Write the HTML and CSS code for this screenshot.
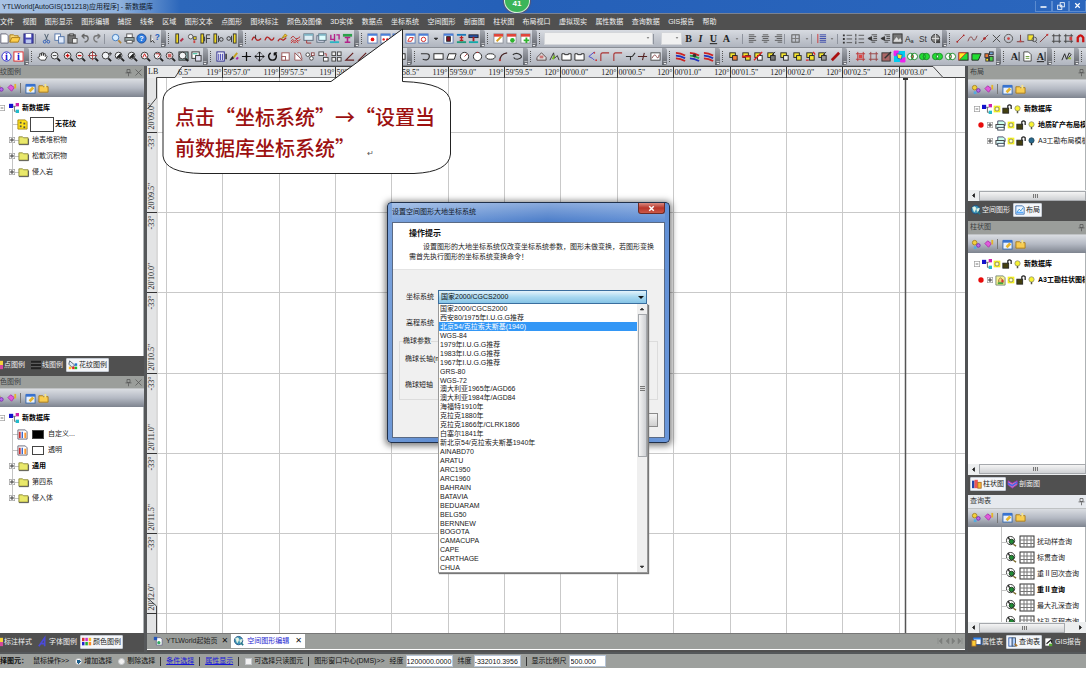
FILE: index.html
```html
<!DOCTYPE html>
<html lang="zh-CN">
<head>
<meta charset="utf-8">
<title>YTLWorld[AutoGIS(151218)应用程序] - 新数据库</title>
<link rel="stylesheet" href="styles.css">
</head>
<body>
<div class="app">
  <header class="titlebar">
    <h1 class="titlebar-text">YTLWorld[AutoGIS(151218)应用程序] - 新数据库</h1>
    <span class="badge">41</span>
    <div class="window-buttons">
      <button class="win-btn" aria-label="最小化"><i data-icon="winmin"></i></button>
      <button class="win-btn" aria-label="还原"><i data-icon="winmax"></i></button>
      <button class="win-btn" aria-label="关闭"><i data-icon="winclose"></i></button>
    </div>
  </header>
  <nav class="menubar">
    <div class="menu-list">
      <a href="#">文件</a><a href="#">视图</a><a href="#">图形显示</a><a href="#">图形编辑</a><a href="#">捕捉</a><a href="#">线条</a><a href="#">区域</a><a href="#">图形文本</a><a href="#">点图形</a><a href="#">图块标注</a><a href="#">颜色及图像</a><a href="#">3D实体</a><a href="#">数据点</a><a href="#">坐标系统</a><a href="#">空间图形</a><a href="#">剖面图</a><a href="#">柱状图</a><a href="#">布局视口</a><a href="#">虚拟现实</a><a href="#">属性数据</a><a href="#">查询数据</a><a href="#">GIS报告</a><a href="#">帮助</a>
    </div>
  </nav>
  <div class="toolbar" id="bar1"></div>
  <div class="toolbar" id="bar2"></div>

  <main class="workspace">
    <aside class="side side-left">
      <section class="panel grow-26">
        <h2 class="panel-title">纹图例<span class="title-tools"><i data-icon="pin"></i><i data-icon="cross"></i></span></h2>
        <div class="panel-tools" data-paneltools></div>
        <div class="panel-body tree tree-left">
          <div class="row bold"><i data-icon="minus"></i><i data-icon="db"></i><span>新数据库</span></div>
          <div class="row bold child"><i data-icon="pattern"></i><span class="swatch wide"></span><span>无花纹</span></div>
          <div class="row child"><i data-icon="plus"></i><i data-icon="folder"></i><span>地表堆积物</span></div>
          <div class="row child"><i data-icon="plus"></i><i data-icon="folder"></i><span>松散沉积物</span></div>
          <div class="row child"><i data-icon="plus"></i><i data-icon="folder"></i><span>侵入岩</span></div>
        </div>
        <div class="tabs">
          <button class="tab flush"><i class="cut-icon" data-icon="tag"></i>点图例</button>
          <button class="tab"><i data-icon="lines"></i>线图例</button>
          <button class="tab active"><i data-icon="paint"></i>花纹图例</button>
        </div>
      </section>
      <section class="panel grow-22">
        <h2 class="panel-title">色图例<span class="title-tools"><i data-icon="pin"></i><i data-icon="cross"></i></span></h2>
        <div class="panel-tools" data-paneltools></div>
        <div class="panel-body tree tree-left">
          <div class="row bold"><i data-icon="minus"></i><i data-icon="db"></i><span>新数据库</span></div>
          <div class="row child"><i data-icon="palette"></i><span class="swatch black"></span><span>自定义...</span></div>
          <div class="row child"><i data-icon="palette"></i><span class="swatch"></span><span>透明</span></div>
          <div class="row child bold"><i data-icon="plus"></i><i data-icon="folder"></i><span>通用</span></div>
          <div class="row child"><i data-icon="plus"></i><i data-icon="folder"></i><span>第四系</span></div>
          <div class="row child"><i data-icon="plus"></i><i data-icon="folder"></i><span>侵入体</span></div>
        </div>
        <div class="tabs">
          <button class="tab flush"><i class="cut-icon" data-icon="tag"></i>标注样式</button>
          <button class="tab"><i data-icon="fontA"></i>字体图例</button>
          <button class="tab active"><i data-icon="colors"></i>颜色图例</button>
        </div>
      </section>
    </aside>

    <section class="center">
      <div class="canvas" id="canvas"></div>
      <div class="doc-tabs">
        <button class="doc-tab"><i data-icon="page"></i>YTLWorld起始页<b>✕</b></button>
        <button class="doc-tab current"><i data-icon="globe"></i>空间图形编辑<b>✕</b></button>
        <span class="doc-nav"><i data-icon="docnav"></i></span>
      </div>
    </section>

    <aside class="side side-right">
      <section class="panel grow-8">
        <h2 class="panel-title">布局<span class="title-tools"><i data-icon="pin"></i></span></h2>
        <div class="panel-tools right" data-paneltools></div>
        <div class="panel-body tree tree-right">
          <div class="row bold"><i data-icon="minus"></i><i data-icon="db"></i><i data-icon="sun"></i><i data-icon="lock"></i><i data-icon="bulb"></i><span>新数据库</span></div>
          <div class="row bold child"><i data-icon="dot"></i><i data-icon="plus"></i><i data-icon="layout"></i><i data-icon="sun"></i><i data-icon="lock"></i><i data-icon="bulb"></i><span>地质矿产布局模</span></div>
          <div class="row child"><i data-icon="blank"></i><i data-icon="plus"></i><i data-icon="layout"></i><i data-icon="sun"></i><i data-icon="lock"></i><i data-icon="bulboff"></i><span>A3工勘布局模板</span></div>
        </div>
        <div class="hscroll"><i data-icon="left"></i><span class="thumb"></span></div>
        <div class="tabs">
          <button class="tab"><i data-icon="globe"></i>空间图形</button>
          <button class="tab active"><i data-icon="chartpage"></i>布局</button>
        </div>
      </section>
      <section class="panel grow-20">
        <h2 class="panel-title">柱状图<span class="title-tools"><i data-icon="pin"></i></span></h2>
        <div class="panel-tools right" data-paneltools></div>
        <div class="panel-body tree tree-right">
          <div class="row bold"><i data-icon="minus"></i><i data-icon="db"></i><i data-icon="sun"></i><i data-icon="lock"></i><i data-icon="bulb"></i><span>新数据库</span></div>
          <div class="row bold child"><i data-icon="dot"></i><i data-icon="plus"></i><i data-icon="column"></i><i data-icon="sun"></i><i data-icon="lock"></i><i data-icon="bulb"></i><span>A3工勘柱状图模</span></div>
        </div>
        <div class="hscroll"><i data-icon="left"></i><span class="thumb"></span></div>
        <div class="tabs">
          <button class="tab active"><i data-icon="bars"></i>柱状图</button>
          <button class="tab"><i data-icon="section"></i>剖面图</button>
        </div>
      </section>
      <section class="panel grow-8">
        <h2 class="panel-title light">查询表<span class="title-tools"><i data-icon="pin"></i></span></h2>
        <div class="panel-tools right" data-paneltools></div>
        <div class="panel-body tree tree-query">
          <div class="row"><i data-icon="query"></i><i data-icon="table"></i><span>扰动样查询</span></div>
          <div class="row"><i data-icon="query"></i><i data-icon="table"></i><span>标贯查询</span></div>
          <div class="row"><i data-icon="query"></i><i data-icon="table"></i><span>重Ⅱ回次查询</span></div>
          <div class="row bold"><i data-icon="query"></i><i data-icon="table"></i><span>重Ⅱ查询</span></div>
          <div class="row"><i data-icon="query"></i><i data-icon="table"></i><span>最大孔深查询</span></div>
          <div class="row"><i data-icon="query"></i><i data-icon="table"></i><span>钻孔高程查询</span></div>
        </div>
        <div class="hscroll"><i data-icon="left"></i><span class="thumb"></span><i data-icon="right"></i></div>
        <div class="tabs">
          <button class="tab"><i data-icon="prop"></i>属性表</button>
          <button class="tab active"><i data-icon="book"></i>查询表</button>
          <button class="tab"><i data-icon="report"></i>GIS报告</button>
        </div>
      </section>
    </aside>
  </main>

  <footer class="statusbar">
    <strong>择图元：</strong>
    <span>鼠标操作&gt;&gt;</span>
    <label><input type="radio" name="mode" checked>增加选择</label>
    <label><input type="radio" name="mode">剔除选择</label>
    <i class="bar"></i><a href="#">条件选择</a><i class="bar"></i><a href="#">属性显示</a><i class="bar"></i>
    <label><input type="checkbox">可选择只读图元</label>
    <i class="bar"></i>
    <span>图形窗口中心(DMS)&gt;&gt;</span>
    <label>经度<input class="num" type="text" value="1200000.0000"></label>
    <label>纬度<input class="num" type="text" value="-332010.3956"></label>
    <i class="bar"></i>
    <label>显示比例尺<input class="num short" type="text" value="500.000"></label>
  </footer>

  <div class="dialog" role="dialog" aria-labelledby="dlg-title">
    <div class="dialog-title"><span id="dlg-title">设置空间图形大地坐标系统</span><button class="dialog-close" aria-label="关闭"><i data-icon="x"></i></button></div>
    <div class="dialog-client">
      <div class="dialog-hint">
        <h3>操作提示</h3>
        <p>设置图形的大地坐标系统仅改变坐标系统参数，图形未做变换，若图形变换需首先执行图形的坐标系统变换命令！</p>
      </div>
      <div class="dialog-form">
        <div class="field first"><label for="crs">坐标系统</label>
          <div class="combo-wrap">
            <select id="crs" class="combo"><option>国家2000/CGCS2000</option></select>
            <div class="droplist">
              <ul id="crs-list" role="listbox" aria-label="坐标系统列表"></ul>
              <div class="vscroll"><i data-icon="up"></i><span class="vthumb"></span><span class="vspace"></span><i data-icon="down"></i></div>
            </div>
          </div>
        </div>
        <div class="field"><label>高程系统</label></div>
        <fieldset class="params">
          <legend>椭球参数</legend>
          <div>椭球长轴(m)</div>
          <div>椭球短轴</div>
        </fieldset>
        <div class="dialog-actions"><button class="dialog-btn" aria-label="取消"></button></div>
      </div>
    </div>
  </div>

  <div class="callout">
    <svg class="callout-shape" viewBox="0 0 292 150" aria-hidden="true"><path d="M240.500 1 L169 53.500 H40 Q1 55 1 73 V128 Q3 145 40 145.500 H252 Q287 144 288.500 126 V74 Q287 55 240.500 53.500 Z" fill="#fff" stroke="#222"/></svg>
    <p class="callout-text">点击“坐标系统”→“设置当<br>前数据库坐标系统”<small>↵</small></p>
  </div>
</div>
<script src="app.js"></script>
</body>
</html>
```

FILE: styles.css
```css
* { box-sizing: border-box; }
body {
  margin: 0;
  background: #fff;
  color: #1a1a1a;
  font: 7px/10px "Liberation Sans", "Noto Sans CJK SC", sans-serif;
  overflow: hidden;
}
.app { position: relative; display: flex; flex-direction: column; height: 100vh; padding-bottom: 12px; overflow: hidden; }
h1, h2, h3, p, ul { margin: 0; padding: 0; font-size: inherit; font-weight: inherit; list-style: none; }
a { color: inherit; text-decoration: none; }
button, input, select { font: inherit; color: inherit; margin: 0; padding: 0; border: 0; background: none; }
i[data-icon] { display: flex; flex: none; }
svg { display: block; flex: none; overflow: visible; }

.titlebar { position: relative; display: flex; align-items: center; justify-content: space-between; height: 13px; flex: none; background: linear-gradient(90deg, #a9c3e4 0, #8fb2dd 120px, #2c67bb 180px, #2560b8 500px, #2b66bd 100%); }
.titlebar-text { padding-left: 2px; line-height: 12px; color: #10182a; }
.badge { position: absolute; left: calc(50% - 39px); top: -11px; z-index: 5; width: 26px; height: 24px; padding-top: 9px; border: 1px solid #d8f0dc; border-radius: 50%; background: #3cb55a; box-shadow: 0 0 1px 1px #557; color: #fff; font-size: 8px; line-height: 10px; font-weight: bold; text-align: center; }
.window-buttons { display: flex; height: 12px; }
.win-btn { width: 17px; height: 11px; display: flex; align-items: center; justify-content: center; border: 1px solid #5b8bd0; border-top: 0; }

.menubar { flex: none; height: 17px; background: #505050; border-top: 1px solid #7a8292; }
.menu-list { display: flex; justify-content: space-between; width: 66%; color: #f0f0f0; line-height: 15px; white-space: nowrap; }

.toolbar { display: flex; flex: none; height: 18px; background: linear-gradient(#d8dbe1, #c3c7cf 50%, #b0b5bf); border-bottom: 1px solid #8a8e96; overflow: hidden; }
.tool-group { display: flex; align-items: center; min-width: 0; height: 17px; }
.grip { flex: none; width: 5px; height: 11px; border-left: 1px dotted #555; margin-left: 2px; }
.tool { display: flex; align-items: center; justify-content: center; min-width: 0; height: 16px; }
.tool-sep { height: 10px; border-left: 1px solid #8f949e; min-width: 0; }
.tool-cap { flex: none; width: 5px; align-self: stretch; display: flex; align-items: flex-end; justify-content: center; background: linear-gradient(#a4a8b0, #62656c); color: #fff; border-radius: 0 2px 2px 0; }
.tool-combo { appearance: none; height: 13px; min-width: 0; background: #f1f1f1; border: 1px solid #d4d6da; }
.combo-host { position: relative; display: flex; min-width: 0; }
.combo-host select { flex: 1; }
.combo-host svg { position: absolute; right: 1px; top: 2px; }

.workspace { flex: 1; min-height: 0; display: grid; grid-template-columns: 147px 1fr 121px; background: #505050; }
.side { display: flex; flex-direction: column; min-width: 0; min-height: 0; }
.side-left { border-right: 3px solid #56585a; padding-bottom: 2px; }
.side-right { border-left: 3px solid #505254; padding-bottom: 2px; }
.panel { display: flex; flex-direction: column; min-height: 0; flex-basis: 76px; overflow: hidden; }
.grow-26 { flex-grow: 26; }
.grow-22 { flex-grow: 22; }
.grow-20 { flex-grow: 20; }
.grow-8 { flex-grow: 8; }
.panel-title { flex: none; display: flex; justify-content: space-between; height: 13px; line-height: 12px; background: #9b9e9b; color: #3a3d3f; border-bottom: 1px solid #bfc2c4; }
.side-right .panel-title { padding-left: 2px; height: 14px; }
.panel-title.light { background: #e6e9ee; color: #333; }
.title-tools { display: flex; gap: 1px; align-items: center; padding-right: 1px; }
.side-right .title-tools { padding-right: 0; }
.panel-tools { flex: none; display: flex; align-items: center; gap: 2px; height: 18px; background: linear-gradient(#dadde2, #b4b9c3 50%, #7e848f); }
.panel-tools.right { padding-left: 3px; }
.side-left .panel-tools i:first-child { width: 5px; justify-content: flex-end; }
.panel-tools .psep { width: 1px; height: 10px; margin-right: 2px; background: #777; }
.panel-body { position: relative; flex: 1; min-height: 0; padding-top: 3px; background: #fff; overflow: hidden; border-right: 1px solid #aeb2b4; }
.row { display: flex; align-items: center; height: 16px; white-space: nowrap; position: relative; }
.bold { font-weight: bold; color: #000; }
.tree-left .row { gap: 3px; padding-left: 2px; }
.tree-left .row i:first-child { margin-left: -4px; }
.tree-left .row.child { padding-left: 12px; }
.tree-left .row.child::before, .tree-query .row::before { content: ""; position: absolute; left: 12px; top: -7px; width: 6px; height: 15px; border-left: 1px solid #c4c4c4; border-bottom: 1px solid #c4c4c4; }
.tree-left .row > * { position: relative; }
.tree-left .row.child > i:nth-child(2) { margin-left: -1px; }
.tree-left .row.child > i[data-icon="pattern"], .tree-left .row.child > i[data-icon="palette"] { margin-left: 5px; }
.swatch { width: 12px; height: 9px; border: 1px solid #444; background: #fff; margin: 0 1px 0 1px; }
.swatch.wide { width: 24px; height: 15px; margin: 0 -2px 0 -1px; }
.swatch.black { background: #000; }
.tree-right .row { padding-left: 5px; gap: 1px; }
.tree-right .row.child { padding-left: 9px; }
.tree-right .row span { padding-left: 1px; }
.panel-body.tree-query { padding-top: 7px; }
.tree-query .row { padding-left: 38px; gap: 4px; }
.tree-query .row::before { left: 33px; top: -8px; height: 16px; }
.hscroll { flex: none; display: flex; align-items: center; height: 11px; background: #eceeef; }
.hscroll .thumb { flex: 1; height: 10px; border: 1px solid #a6a9ad; background: linear-gradient(#f4f4f4, #cfd1d4); background-clip: padding-box; position: relative; }
.thumb::after { content: ""; position: absolute; left: 50%; top: 2px; width: 5px; height: 4px; background: repeating-linear-gradient(90deg, #777 0 1px, #ddd 1px 2px); }
.hscroll .thumb:not(:last-child) { margin-right: 10px; }
.tabs { flex: none; display: flex; align-items: center; gap: 1px; height: 18px; margin-bottom: 2px; background: #505050; color: #f0f0f0; white-space: nowrap; }
.side-right .tabs { padding-left: 2px; }
.tab { display: flex; align-items: center; gap: 1px; height: 14px; padding: 0 2px 0 1px; line-height: 12px; }
.tab.flush { padding: 0 4px 0 0; }
.cut-icon { width: 3px; justify-content: flex-end; }
.tab.active { background: #f4f6f9; color: #222; border: 1px solid #c5cbd3; border-radius: 1px; padding: 0 1px; }
.side:last-child .panel:last-child .tabs, .side-left .panel:last-child .tabs { height: 17px; margin-bottom: 0; }

.center { display: flex; flex-direction: column; min-width: 0; min-height: 0; background: #9b9e9b; border-bottom: 1px solid #fff; margin-bottom: 2px; }
.canvas { flex: 1; min-height: 0; background: #fff; overflow: hidden; }
.canvas text { font-family: "Liberation Serif", serif; font-size: 8px; fill: #222; }
.doc-tabs { flex: none; display: flex; align-items: flex-start; height: 16px; padding-left: 3px; background: #9b9e9b; border-top: 1px solid #777; }
.doc-tab { display: flex; align-items: center; gap: 3px; height: 14px; padding: 0 3px; color: #222; white-space: nowrap; }
.doc-tab b { padding-left: 1px; font: bold 8px/10px "DejaVu Sans", sans-serif; color: #111; }
.doc-tab.current { background: #fff; color: #1c1cd0; }
.doc-tab.current b { padding-left: 3px; }
.doc-nav { margin: 3px 2px 0 auto; }

.statusbar { flex: none; display: flex; align-items: center; height: 16px; gap: 5px; background: #9da09d; color: #111; border-top: 2px solid #55585a; white-space: nowrap; }
.statusbar label { display: flex; align-items: center; gap: 2px; }
.statusbar a { color: #1616d8; text-decoration: underline; }
.statusbar .bar { width: 1px; height: 9px; background: #333; }
.statusbar input[type="radio"], .statusbar input[type="checkbox"] { appearance: none; width: 7px; height: 7px; background: #f2f2f2; border: 1px solid #c5c8cb; }
.statusbar label:has([type="checkbox"]), .statusbar label:has([type="radio"]) { margin-left: 1px; }
.statusbar input[type="radio"] { border-radius: 50%; }
.statusbar input[type="radio"]:checked { background: radial-gradient(#1a5f8c 0 2px, #fff 2px); }
.statusbar .num { width: 47px; height: 12px; padding-left: 0; background: #fff; border: 1px solid #b6c4d6; line-height: 10px; color: #111; }
.statusbar .num.short { width: 37px; padding-left: 1px; }

.dialog { position: absolute; left: calc(50% - 156px); top: 202px; width: 283px; padding: 0 4px 4px; border: 1px solid #20304a; border-radius: 4px; background: linear-gradient(100deg, #7ba3dc, #4a7cc9 50%, #6a97da); box-shadow: 0 1px 6px 2px rgba(0, 0, 0, .5); }
.dialog-title { display: flex; justify-content: space-between; height: 19px; line-height: 18px; color: #101828; background: linear-gradient(rgba(255, 255, 255, .35), rgba(255, 255, 255, 0)); }
.dialog-close { width: 27px; height: 11px; margin-right: 0; display: flex; align-items: center; justify-content: center; border: 1px solid #6d2a26; border-top: 0; border-radius: 0 0 3px 3px; background: linear-gradient(#d98a80, #b8352a 50%, #cc5848); }
.dialog-client { border: 1px solid #5a6a84; background: #f0f0f0; }
.dialog-hint { height: 47px; padding: 6px 9px 0 16px; background: #fff; line-height: 10px; border-bottom: 1px solid #e4e4e4; }
.dialog-hint h3 { font-weight: bold; font-size: 8px; color: #111; margin-bottom: 3px; }
.dialog-hint p { text-indent: 14px; }
.dialog-form { padding: 14px 6px 10px; }
.field { display: flex; align-items: center; height: 26px; padding-left: 7px; }
.field > label { width: 32px; white-space: nowrap; }
.combo-wrap { position: relative; width: 209px; }
.combo { display: block; width: 100%; height: 14px; padding-left: 2px; border: 1px solid #3a6e9e; background: linear-gradient(#e4f3fb, #a8d8f0 50%, #86c4e6); color: #111; appearance: none; line-height: 12px; }
.combo-wrap::after { content: ""; position: absolute; right: 3px; top: 6px; border: 3px solid transparent; border-top-color: #111; border-bottom: 0; }
.droplist { position: absolute; left: 0; top: 14px; z-index: 3; display: flex; width: 210px; border: 1px solid #999; border-top: 0; background: #fff; box-shadow: 1px 1px 1px #777; line-height: 9px; color: #1a1a1a; }
.droplist ul { flex: 1; height: 268px; display: flex; flex-direction: column; }
.droplist li { flex: 1; min-height: 0; padding-left: 1px; white-space: nowrap; }
.droplist li.selected { background: #3397f6; color: #fff; }
.vscroll { width: 10px; display: flex; flex-direction: column; align-items: center; background: #efefef; }
.vthumb { position: relative; flex: 142; width: 9px; border: 1px solid #a4a7ab; background: linear-gradient(90deg, #f4f4f4, #cfd1d4); }
.vthumb::after { content: ""; position: absolute; top: 50%; left: 1px; width: 5px; height: 5px; background: repeating-linear-gradient(#777 0 1px, #ddd 1px 2px); }
.vspace { flex: 105; }
.params { margin: 0; padding: 8px 8px 0 5px; height: 64px; border: 1px solid #dcdcdc; }
.params legend { padding: 0; margin-left: -2px; }
.params div { height: 26px; }
.dialog-actions { display: flex; justify-content: flex-end; padding-top: 13px; }
.dialog-btn { width: 40px; height: 14px; border: 1px solid #8a8a8a; background: linear-gradient(#f4f4f4, #d0d0d0); }

.callout { position: absolute; left: 162px; top: 28px; width: 292px; height: 150px; z-index: 6; }
.callout-shape { width: 292px; height: 150px; }
.callout-text { position: absolute; left: 13px; top: 73px; font: 500 20px/31px "Noto Sans CJK SC", sans-serif; color: #9c1010; white-space: nowrap; }
.callout-text small { font-size: 8px; color: #555; padding-left: 12px; }
```

FILE: app.js
```js
const p = (d, s = '#333', f = 'none', w = 1) => `<path d="${d}" stroke="${s}" fill="${f}" stroke-width="${w}"/>`;
const r = (x, y, w, h, f = 'none', s = 'none') => `<rect x="${x}" y="${y}" width="${w}" height="${h}" fill="${f}" stroke="${s}"/>`;
const c = (x, y, q, f = 'none', s = 'none') => `<circle cx="${x}" cy="${y}" r="${q}" fill="${f}" stroke="${s}"/>`;
const mag = inner => c(5, 5, 3.7, '#f2f4f6', '#333') + p('M8 8L11 11', '#222', 'none', 2) + inner;
const win = inner => r(1, 1, 10, 10, '#fff', '#5b78b0') + r(1, 1, 10, 2, '#4a7fd8') + inner;
const over = (a, b) => r(2, 2, 6, 5, '#f4e430', '#222') + r(5, 5, 5, 5, a, '#222') + (b || '');
const venn = (a, b, m) => c(4, 6, 3.5, a, '#1d8a2a') + c(8, 6, 3.5, b, '#1d8a2a') + p('M6 3.200Q8.200 6 6 8.800Q3.800 6 6 3.200Z', '#1d8a2a', m);
const hatch = s => p('M3 1V11M9 1V11M1 3H11M1 9H11', s);
const letter = (t, x = '') => `<text x="6" y="10" text-anchor="middle" font-family="Liberation Serif" font-size="11" font-weight="bold" fill="#222" ${x}>${t}</text>`;

const icons = {
  newdoc: p('M2 1H8L10 3V11H2Z', '#667', '#fff'),
  open: p('M1 10V2H5L6 3H10V5', '#a87b18', '#f7d774') + p('M1 10L3 5H12L10 10Z', '#a87b18', '#ffcf4a'),
  save: r(1, 1, 10, 10, '#4a4ab8', '#27277a') + r(3, 1, 6, 4, '#fff') + r(3, 7, 6, 4, '#b9c6ee'),
  cut: p('M4 1L7 8M8 1L5 8', '#456') + c(4, 9.500, 1.500, 'none', '#2659b8') + c(8, 9.500, 1.500, 'none', '#2659b8'),
  copy: r(1, 1, 6, 7, '#fff', '#5173a8') + r(5, 4, 6, 7, '#dfeafc', '#5173a8'),
  paste: r(1, 2, 8, 9, '#777', '#444') + r(3, 1, 4, 2, '#ccc', '#444') + r(6, 6, 5, 5, '#eee', '#555'),
  undo: p('M3 3H7Q10 3 10 6T6 10M3 3L6 1M3 3L6 6', '#666', 'none', 1.4),
  redo: p('M9 3H5Q2 3 2 6T6 10M9 3L6 1M9 3L6 6', '#777', 'none', 1.4),
  find: c(5, 5, 3.500, '#d6ecff', '#3a76bd') + p('M8 8L11 11', '#b4843c', 'none', 2),
  print: r(3, 1, 6, 4, '#fff', '#555') + r(1, 5, 10, 4, '#9aa', '#444') + r(3, 8, 6, 3, '#fff', '#555'),
  help: c(6, 6, 5, '#2f7de0', '#174b9a') + '<text x="6" y="9" text-anchor="middle" font-family="Liberation Sans" font-size="8" font-weight="bold" fill="#fff">?</text>',
  whats: p('M2 2V10L4 8L6 11', '#333', '#fff') + '<text x="9" y="8" text-anchor="middle" font-family="Liberation Sans" font-size="9" font-weight="bold" fill="#2460c0">?</text>',
  snap1: r(2, 1, 3, 10, '#f0d820', '#333') + p('M7 9L10 6', '#b3304a', 'none', 2),
  snap2: c(4, 4, 2.500, '#e8e8e8', '#555') + r(7, 4, 3, 3, '#f0d820', '#555') + p('M8 8V11', '#c44', 'none', 2),
  snap3: r(1, 1, 3, 10, '#f0d820', '#333') + p('M7 2V11M7 2H11M7 6H11M5 4V9'),
  snap4: r(1, 1, 3, 10, '#f0d820', '#333') + p('M6 3V10') + c(9, 7, 2, 'none', '#333'),
  snap5: r(8, 1, 3, 10, '#f0d820', '#333') + p('M6 3V10') + c(3, 6, 2, 'none', '#333'),
  line1: p('M1 8Q3 2 5 6T11 6', '#b32222', 'none', 1.4) + p('M5 2V6', '#333'),
  line2: p('M1 8Q3 2 6 6T11 5', '#b32222', 'none', 1.4),
  line3: p('M1 9Q3 5 5 7T10 5', '#b32222', 'none', 1.4) + p('M5 6L9 1L11 3Z', '#a88318', '#f2c72e'),
  line4: p('M1 6Q3 2 5 5T11 4', '#b32222') + p('M1 9L3 7L5 9L7 7L9 9L11 7M1 11L3 9L5 11L7 9L9 11', '#c22'),
  scr: r(1, 1, 10, 7, '#dfeef5', '#567') + r(1, 1, 10, 2, '#7fb4c4') + p('M4 8V11H9', '#a33'),
  scr2: r(1, 3, 8, 7, '#eef', '#567') + r(3, 1, 8, 7, '#dff', '#567') + r(3, 1, 8, 2, '#7fb4c4'),
  cross1: r(1, 9, 10, 2, '#2ab5c4') + p('M2 2V7H6M6 1V9M8 2H11V7', '#b3228a', 'none', 1.5),
  cross2: r(1, 1, 10, 3, '#2ba04a') + p('M3 5H9M6 4V10M3 10H9', '#b3228a', 'none', 1.7),
  dotw: win(c(6, 7, 2, '#e11')), dots: win(c(4, 7, 1.300, '#e11') + c(8, 7, 1.300, '#e11')), grid4: win(p('M3 9L8 4M4 9H9V5', '#c22')),
  edit: win(p('M3 9L5 5H9L7 9Z', '#c22', '#fff')), ring: win(c(6, 7, 2.400, 'none', '#c22')), down: win(p('M6 4V9M4 7L6 9L8 7M3 10H9', '#23b', 'none', 1.2)),
  fill: win(r(4, 4, 4, 5, '#812', '#222')), span: r(1, 1, 10, 2, '#1c7ab8') + r(1, 9, 10, 2, '#1c9a78') + p('M6 3V9M4 5H8M4 8H8', '#b22', 'none', 1.4),
  span2: r(1, 2, 10, 3, '#25a', '#223') + r(1, 9, 10, 2, '#1aa') + p('M6 4V9', '#a22', 'none', 2),
  tpen: r(1, 1, 10, 10, '#fff', '#8a8f98') + r(1, 1, 10, 3, '#e0453a') + p('M4 9L9 4', '#d8a020', 'none', 2),
  tgo: r(1, 1, 10, 10, '#fff', '#8a8f98') + r(1, 1, 10, 3, '#e0453a') + c(7, 8, 2.500, '#2eb32e'),
  tadd: r(1, 1, 10, 10, '#fff', '#8a8f98') + r(1, 1, 10, 3, '#e0453a') + p('M7 5V11M4 8H10', '#2eb32e', 'none', 2),
  B: letter('B'), I: letter('I', 'font-style="italic"'), U: letter('U', 'text-decoration="underline"'), A: letter('A'),
  al: p('M2 2H8M2 4H10M2 6H8M2 8H10M2 10H7', '#555'), ac: p('M3 2H9M2 4H10M3 6H9M2 8H10M4 10H8', '#555'), ar: p('M4 2H10M2 4H10M4 6H10M2 8H10M5 10H10', '#555'),
  border: r(2, 2, 8, 8, 'none', '#555') + p('M6 2V10M2 6H10', '#777'),
  spacing: p('M2 1V11', '#c33') + p('M4 2H11M4 4H11M4 6H11M4 8H11M4 10H11', '#34a'),
  list: p('M1 2.500H3M1 6.500H3M1 10.500H3', '#333', 'none', 2) + p('M5 2.500H11M5 6.500H11M5 10.500H11', '#555'),
  olist: p('M2 1V4M2 5V8M2 9V12', '#333') + p('M5 2.500H11M5 6.500H11M5 10.500H11', '#555'),
  indent: p('M5 2H11M7 4H11M7 6H11M5 8H11M5 10H9', '#444') + p('M1 6L5 4V8Z', '#333', '#333'),
  image: r(1, 1, 10, 10, '#777', '#333') + p('M2 9L5 5L7 8L9 6L10 9Z', '#ddd', '#ddd'),
  Aa: '<text x="0" y="10" font-family="Liberation Sans" font-size="9" fill="#222">A</text><text x="6" y="11" font-family="Liberation Sans" font-size="6" fill="#222">a</text>',
  St: '<text x="1" y="10" font-family="Liberation Sans" font-size="9" fill="#333">St</text>',
  world: c(6, 6, 4.500, '#888', '#333') + p('M2 6H10M6 1V11', '#ddd') + r(7, 8, 4, 3, '#444'),
  seg: p('M3 9L9 3', '#a33') + c(2.500, 9.500, 1, '#a22') + c(9.500, 2.500, 1, '#a22'),
  curve: p('M1 9Q4 1 6 6T11 3', '#844'), seg2: p('M2 10L10 2', '#844') + c(6, 6, 1.400, '#a22'),
  xx: p('M2 2L10 10M10 2L2 10', '#444'), circ: c(6, 6, 4.500, 'none', '#555') + c(6, 6, 1.500, '#c44'),
  perp: p('M6 2V9M2 9.500H10', '#733') + r(5, 8, 2, 2, '#c44'), ysq: r(1, 2, 6, 6, '#f4e430', '#555') + c(8, 7, 2.500, 'none', '#555') + p('M9 9L11 11', '#555'),
  seg3: p('M1 10L10 1', '#733') + r(8, 1, 2, 2, '#c33'), sharp: hatch('#444'), sharp2: hatch('#444') + r(7, 4, 3, 4, '#c44'),
  magnet: p('M3 10V5Q6 0 9 5V10', '#c11', 'none', 2.5),
  info: c(6, 6, 5, '#fff', '#22c') + letter('i', 'style="fill:#11c"'), info2: r(1, 1, 10, 10, '#fff', '#d22') + letter('i', 'style="fill:#11c"'),
  hand: p('M3 6V3H5V5V2H7V5V3H9V6L10 5L11 6L9 10H4L1 7Z', '#333', '#fff'),
  mhand: mag(p('M3 5H7', '#333')), min: mag(p('M5 3V7M3 5H7', '#c11', 'none', 1.5)), mout: mag(p('M3 5H7', '#c11', 'none', 1.5)), mplus: mag(p('M5 0V10M0 5H10', '#a33')),
  mmove: mag(p('M8 3H12M10 1V5', '#333')), mdark: mag(p('M3 7L7 3V7Z', '#222', '#222')), mA: mag(p('M3 7L5 3L7 7', '#c11')), mq: mag(p('M3 3H7V5L5 7', '#a22')), mred: mag(r(3, 3, 4, 4, '#c66')),
  mwin: r(1, 1, 10, 9, '#8aa', '#333') + mag(''), mscr: r(1, 1, 8, 7, '#fff', '#333') + r(5, 5, 6, 6, '#dde', '#333') + p('M2 3H7', '#1a8'),
  calc: r(1, 1, 8, 10, '#fff', '#228') + p('M3 3V10M5 3V10M7 3V10', '#33a', 'none', 1) + p('M11 3V9', '#222', 'none', 1.5),
  brush: p('M1 10L5 8L4 6Z', '#222', '#222') + p('M5 7L9 2', '#c4a020', 'none', 2) + p('M8 9L10 7', '#a2a', 'none', 2),
  plusx: p('M6 1V11M1 6H11', '#111', 'none', 1.3) + r(5, 5, 2, 2, '#111'), move: p('M6 1V11M1 6H11M4 3L6 1L8 3M4 9L6 11L8 9M3 4L1 6L3 8M9 4L11 6L9 8', '#111'),
  rot: p('M4 2Q1 4 2 7T6 10T10 7T8 2M8 2V5M8 2H11', '#111', 'none', 1.5), sq: r(2, 2, 8, 8, '#fff', '#955') + r(2, 6, 4, 4, '#fff', '#955'),
  tri: p('M2 2V10H10ZM5 2H8L10 9', '#955', '#fff'), chain: c(3, 4, 2, '#fff', '#444') + c(7, 8, 2, '#fff', '#444') + r(7, 2, 3, 3, '#fff', '#844'),
  boxes: r(1, 1, 5, 4, '#fff', '#444') + r(6, 7, 5, 4, '#fff', '#444') + p('M7 3H9V6', '#b44'), four: r(1, 1, 4, 4, '#eee', '#444') + r(7, 1, 4, 4, '#eee', '#444') + r(1, 7, 4, 4, '#eee', '#444') + r(7, 7, 4, 4, '#eee', '#444'),
  ang: p('M10 2L2 10H11', '#622', 'none', 1.3), hook: p('M1 3H7Q11 3 10 7T3 9', '#333', 'none', 1.3), rect: r(1, 3, 10, 6, '#fff', '#222'), para: p('M3 3H11L9 9H1Z', '#222', '#fff'),
  circle: c(6, 6, 4.500, '#fff', '#222') + p('M6 6L9 3', '#a33'), circle2: c(6, 6, 4.500, '#fff', '#222') + r(5, 1, 2, 1, '#c33'), ell: '<ellipse cx="6" cy="6" rx="5" ry="3" fill="#fff" stroke="#222"/>',
  arc: p('M2 11Q2 3 10 2', '#422', 'none', 1.3) + r(1, 9, 2, 2, '#c33'), loop: p('M2 4Q6 1 10 4T7 9Q4 9 3 7', '#333', 'none', 1.3),
  home: p('M1 7L6 2L11 7V10H1Z', '#544', '#ddd') + r(4, 5, 4, 3, '#c77'), pen: p('M1 10L5 2L6 8L9 5L11 10', '#333') + p('M4 9L6 5', '#7b2', 'none', 2),
  notch: p('M1 3H4V4H8V3H11V10H1Z', '#222', '#fff'), zig: p('M8 1L2 6L6 8L8 10', '#44c') + c(10, 10, 1, '#c33') + c(8, 2, 1, '#c33'),
  fil: p('M2 11V4Q2 2 4 2H11', '#a33', 'none', 1.2), trim: p('M1 6H8M8 6L11 2M6 10V6', '#333', 'none', 1.2), trim2: p('M1 6H11M6 10L8 2', '#522', 'none', 1.2), area: r(1, 2, 10, 8, '#fff', '#444') + p('M2 8Q5 2 7 6T10 4', '#844'),
  lay: p('M1 2Q6 2 11 5', '#c22', 'none', 2) + p('M1 5Q6 5 11 8', '#23b', 'none', 2) + p('M1 8Q6 8 11 11', '#c22', 'none', 2),
  lay2: p('M1 2Q6 2 11 5', '#c22', 'none', 2) + p('M1 5Q6 5 11 8', '#2a4', 'none', 2) + p('M1 8Q6 8 11 11', '#23b', 'none', 2) + c(6, 5, 2, '#333'),
  o1: over('#f4803a'), o2: over('#f4e430', r(1, 5, 10, 2, '#d22')), o3: over('#fff', p('M1 10L10 1', '#d22', 'none', 1.5)), o4: over('#777', p('M10 1L6 5', '#222')), o5: over('#eee'), o6: over('#f4e430'), o7: over('#f4e430', p('M9 1L11 4M1 10H4', '#d22', 'none', 1.5)), o8: over('#999', p('M10 1L6 5', '#333')), knife: p('M2 10L10 2', '#a11', 'none', 3),
  h1: hatch('#b33') + r(4, 4, 4, 4, '#d44'), h2: hatch('#944'), h3: r(1, 2, 9, 9, '#a66', '#333') + p('M4 8L11 1', '#333', 'none', 1.5), vivid: r(0, 0, 12, 12, '#0ce') + p('M0 0H5L3 5L0 5ZM12 12H7V9L12 7Z', '#e2e', '#e2e') + p('M3 3L9 4L8 9L4 8Z', '#26c', '#fe2'),
  v1: venn('#fff', '#fff', '#e55'), v2: venn('#2d3', '#2d3', '#2d3'), v3: venn('#2d3', '#2d3', '#fff'), v4: venn('#fff', '#fff', '#f9a'), g1: r(1, 2, 10, 8, '#2d3', '#222') + p('M1 10L9 2H1Z', '#d33', '#fe2'), g2: p('M1 3H11L8 10H1Z', '#222', '#2d3'), g3: r(1, 3, 4, 4, '#e73', '#333') + r(6, 1, 4, 3, '#7ad', '#333') + r(6, 6, 4, 5, '#4c4', '#333') + r(2, 8, 3, 3, '#fe2', '#333'),
  AI: letter('A') + p('M11 1V11', '#222'), doc: p('M2 1H7L10 4V11H2Z', '#444', '#fff') + p('M4 6H8M4 8H8', '#693'), AU: letter('A', 'text-decoration="underline"') + p('M11 1V11', '#222'), slashA: p('M1 10L4 3L6 9L9 2L11 4L7 9', '#222') + r(8, 7, 3, 2, '#9b3'),
  caret: p('M4 5H8L6 7Z', '#666', '#666', 0), capmark: p('M3 8H9L6 11Z', '#fff', '#fff', 0) + p('M3 5H9', '#fff'),
  winmin: p('M2 8H10', '#fff', 'none', 2), winmax: r(2, 5, 5, 5, '#2b66bd', '#fff') + r(5, 2, 5, 5, 'none', '#fff'), winclose: p('M3 3L9 9M9 3L3 9', '#fff', 'none', 1.6),
  pin: p('M4 2H8V6H4ZM2 6.500H10M6 7V11', '#555'), cross: p('M2 2L10 10M10 2L2 10', '#555'),
  minus: r(2, 2, 8, 8, '#fff', '#999') + p('M4 6H8', '#333'), plus: r(2, 2, 8, 8, '#fff', '#999') + p('M3 6H9M6 3V9', '#333', 'none', 1.4),
  db: r(0, 1, 5, 5, '#11c') + r(8, 0, 4, 4, '#c2a') + r(8, 8, 4, 4, '#2bc') + p('M5 4H8M6.500 4V10H8', '#555'),
  pattern: p('M1 1H9L11 3V11H1Z', '#a98a10', '#ffe21c') + r(3, 3, 2, 2, '#554') + r(7, 4, 2, 2, '#554') + r(3, 7, 2, 2, '#554') + r(7, 8, 2, 2, '#554'),
  folder: p('M1 10V2H5L6 3H11V10Z', '#8c8a3e', '#e9e86a') + p('M1 10.500H11.500V4', '#555'),
  palette: p('M1 1H9L11 3V11H1Z', '#667', '#fff') + r(2, 3, 2, 7, '#c33') + r(5, 3, 1.500, 7, '#36c') + r(8, 4, 2, 6, '#f93'),
  sun: r(1, 1, 10, 10, '#f4f020') + c(6, 6, 3, '#fffec0', '#665'), lock: r(1, 5, 7, 6, '#444010', '#222') + p('M7 5V2Q9 0 11 2V6', '#222', 'none', 1.5),
  bulb: c(6, 4.500, 3.500, '#f7f230', '#887') + r(5, 8, 2, 3, '#554'), bulboff: c(6, 4.500, 3.500, '#28688c', '#245') + r(5, 8, 2, 3, '#222'),
  layout: p('M3 1H9L11 3V6H3Z', '#446', '#cfe') + r(1, 5, 9, 4, '#dff', '#333') + r(3, 8, 7, 3, '#fff', '#345'), column: p('M1 1H9L11 3V11H1Z', '#787', '#f7f28c') + p('M4 8V5L6 3L9 6V8Z', '#a74', '#f3d27a') + r(3, 8, 6, 2, '#4a4') + r(7, 5, 2, 3, '#d33'),
  dot: c(6, 6, 4, '#e80b0b'), blank: '', query: c(5, 5, 4.500, '#fff', '#333') + c(6, 6, 2.500, '#1f8a34', '#1a3a1a') + p('M2 1L4 4', '#222', 'none', 1.5) + p('M8 9L11 11', '#7a6a2a', 'none', 1.5),
  table: r(-1, 0, 14, 11, '#fff', '#333') + p('M-1 4H13M-1 7.500H13M3 0V11M6 0V11M10 0V11', '#777'), left: p('M7 4L5 6L7 8Z', '#222', '#222'), right: p('M5 4L7 6L5 8Z', '#222', '#222'), up: p('M4 7H8L6 5Z', '#222', '#222'), down: p('M4 5H8L6 7Z', '#222', '#222'),
  tag: r(4, 1, 8, 5, '#f5d23c') + r(6, 6, 6, 5, '#d54a9a'), lines: r(0, 1, 12, 10, '#222') + p('M0 4H12M0 8H12', '#777', 'none', 1), paint: p('M2 1L8 6L5 9L1 5Z', '#456', '#dde8f4') + r(5, 8, 3, 3, '#e22') + r(8, 8, 3, 3, '#2b2') + r(8, 4, 3, 3, '#27c') + r(1, 8, 3, 3, '#fb2'),
  fontA: p('M1 11L8 1V11M4 8H9', '#4a4ad8', 'none', 2), colors: r(0, 1, 3, 4, '#d33') + r(4, 1, 3, 4, '#c3c') + r(8, 1, 3, 4, '#fb2') + r(0, 6, 3, 4, '#22c') + r(4, 6, 3, 4, '#2a3') + r(8, 6, 3, 4, '#f82'),
  page: p('M4 2H9L11 4V11H4Z', '#668', '#fff') + r(1, 1, 4, 4, '#25b') + c(7, 8, 2, '#3a6'), globe: c(5.500, 5.500, 5, '#3f97b8', '#1c4c80') + p('M2 3Q5 1 6 4L4 8ZM7 5L10 4L8 9Z', '#dff0e0', '#e8f6ea') + p('M8 8L11 11', '#278', 'none', 2),
  chartpage: p('M1 1H9L11 3V11H1Z', '#36a', '#eef6ff') + p('M2 9L5 5L7 7L10 3', '#28c') + r(2, 8, 8, 2, '#5af'), bars: r(0, 2, 3, 9, '#24a') + r(3, 1, 4, 10, '#e55') + r(7, 4, 4, 7, '#fb3', '#a62'), section: p('M0 2L5 5L11 2V7L5 11L0 7Z', '#83b', '#e7a') + p('M0 5L5 8L11 4', '#46e', 'none', 2),
  prop: r(3, 1, 9, 8, '#fff', '#25a') + r(3, 1, 9, 2, '#38e') + r(1, 4, 5, 7, '#fc3', '#963'), book: r(1, 1, 4, 10, '#e8eeff', '#25a') + r(5, 1, 4, 10, '#acf', '#345') + p('M8 8L11 11', '#a73', 'none', 2), report: p('M1 1H8L10 3V11H1Z', '#333', '#fff') + p('M3 8L9 3M9 3V7', '#222', 'none', 1.5) + r(6, 8, 4, 3, '#5a3'),
  x: p('M3 3L9 9M9 3L3 9', '#fff', 'none', 2),
  p1: c(4, 4, 2.500, '#f2cf3c', '#a82') + c(8, 7, 2, '#b6e', '#73a') + r(3, 8, 3, 3, '#5ad'), p2: p('M1 5L4 2L8 5L5 9Z', '#a3a', '#e05adc') + p('M9 1V6', '#e3b52c', 'none', 2), p3: r(1, 2, 10, 9, '#eaf3ff', '#36a') + r(1, 1, 10, 3, '#3772d0') + p('M5 9L9 5', '#e8b52c', 'none', 3), p4: p('M1 10V3H5L6 4H11V10Z', '#a77b1c', '#f9cd50') + p('M8 1V5', '#f6e48a', 'none', 2)
};
const small = { minus: 8, plus: 8, sun: 8, lock: 10, bulb: 9, bulboff: 9, dot: 8, blank: 8, pin: 9, cross: 9, x: 9, winmin: 9, winmax: 10, winclose: 9, caret: 8, capmark: 6, db: 10, query: 11, table: 12, left: 11, right: 11, up: 10, down: 10 };
const tabIcons = 10;
function svg(name, size) {
  const s = size || small[name] || 11;
  return `<svg width="${s}" height="${s}" viewBox="0 0 12 12" aria-hidden="true">${icons[name]}</svg>`;
}

const bars = {
  bar1: [
    [166, 'newdoc:8 open:13 save:14 |:4 cut copy paste undo redo |:5 find print help whats', 'nogrip'],
    [77, 'snap1 snap2 snap3 snap4 snap5'], [116, 'line1 line2 line3 line4 scr scr2 cross1 cross2'],
    [126, 'dotw dots grid4 edit ring down fill span span2'], [52, 'tpen tgo tadd'],
    [410, 'combo:109 |:7 combo:21 B I U A caret:10 |:3 al ac ar |:4 border caret:9 |:3 spacing caret:9 |:3 list olist indent indent image Aa St world'],
    [139, 'seg curve seg2 xx circ perp ysq seg3 sharp sharp2 magnet', 'nocap']],
  bar2: [
    [29, 'info info2', 'nogrip'], [179, 'hand mhand min mout mplus mmove mdark mdark mA mq mred mwin mscr'],
    [204, 'calc brush plusx move rot sq tri chain boxes four ang ang rect arc rect'], [116, 'hook rect para circle circle2 ell arc loop'],
    [139, 'home pen notch notch zig fil fil trim trim2 area'], [53, 'lay lay2 lay'], [127, 'o1 o2 o3 o4 o5 o6 o7 o8 knife'],
    [154, 'h1 h2 h3 vivid v1 v2 v3 v4 g1 g2 g3'], [51, 'AI doc AU'], [27, 'slashA'], [7, '', 'nocap']]
};
for (const [id, groups] of Object.entries(bars)) {
  document.getElementById(id).innerHTML = groups.map(([w, items, flag]) => {
    const body = items.split(' ').filter(Boolean).map(t => {
      const [n, g = 12.7] = t.split(':'), st = `style="flex:${g} 1 0"`;
      if (n === '|') return `<span class="tool-sep" ${st}></span>`;
      if (n === 'combo') return `<span class="combo-host" ${st}><select class="tool-combo" aria-label="字体选项"></select>${svg('caret')}</span>`;
      return `<button class="tool" aria-label="${n}" ${st}>${svg(n)}</button>`;
    }).join('');
    return `<div class="tool-group" style="flex:${w} 1 0">${flag === 'nogrip' ? '' : '<span class="grip"></span>'}${body}${flag === 'nocap' ? '' : `<span class="tool-cap">${svg('capmark')}</span>`}</div>`;
  }).join('');
}
document.querySelectorAll('[data-paneltools]').forEach(e => {
  e.innerHTML = `<i>${svg('p1')}</i><i>${svg('p2')}</i><span class="psep"></span><i>${svg('p3')}</i><i>${svg('p4')}</i>`;
  e.querySelectorAll('i').forEach(i => { i.dataset.icon = 'tool'; });
});
document.querySelectorAll('i[data-icon]').forEach(e => {
  const n = e.dataset.icon;
  if (n === 'tool') return;
  if (n === 'docnav') { e.innerHTML = `<svg width="26" height="8" viewBox="0 0 26 8">${p('M1 1V7M5 1L2 4L5 7ZM12 1L9 4L12 7ZM15 1L18 4L15 7ZM21 1L24 4L21 7ZM25 1V7', '#7c7f7c', '#7c7f7c', .5)}</svg>`; return; }
  e.innerHTML = svg(n, e.closest('.tab,.doc-tab') ? tabIcons : 0);
});

const crs = ['国家2000/CGCS2000', '西安80/1975年I.U.G.G推荐', '北京54/克拉索夫斯基(1940)', 'WGS-84', '1979年I.U.G.G推荐', '1983年I.U.G.G推荐', '1967年I.U.G.G推荐', 'GRS-80', 'WGS-72', '澳大利亚1965年/AGD66', '澳大利亚1984年/AGD84', '海福特1910年', '克拉克1880年', '克拉克1866年/CLRK1866', '白塞尔1841年', '新北京54/克拉索夫斯基1940年', 'AINABD70', 'ARATU', 'ARC1950', 'ARC1960', 'BAHRAIN', 'BATAVIA', 'BEDUARAM', 'BELG50', 'BERNNEW', 'BOGOTA', 'CAMACUPA', 'CAPE', 'CARTHAGE', 'CHUA'];
document.getElementById('crs-list').innerHTML = crs.map((t, i) => `<li role="option" aria-selected="${i === 2}"${i === 2 ? ' class="selected"' : ''}>${t}</li>`).join('');

/* Map view: graticule, rulers along the top and left edges */
function drawCanvas() {
  const host = document.getElementById('canvas'), W = host.clientWidth, H = host.clientHeight;
  let grid = '', ticks = '';
  for (let k = 0; 19 + k * 56.35 < W; k++) {
    const x = Math.round(19 + k * 56.35) + .5, sec = 56.5 + k * .5, past = sec >= 60;
    grid += p(`M${x} 12V${H}`, '#c9c9c9');
    if (k > 13) continue;
    const t = past ? `00'0${(sec - 60).toFixed(1)}"` : `59'${sec.toFixed(1)}"`;
    if (k) ticks += p(`M${x} 1V12`, '#333') + `<text x="${x - 1}" y="9" text-anchor="end">${past ? '120°' : '119°'}</text><text x="${x + 1}" y="9">${t}</text>`;
    else ticks += `<text x="31" y="9">6.5"</text>`;
  }
  for (let k = 0; 66 + k * 80.2 < H; k++) {
    const y = Math.round(66 + k * 80.2) + .5, sec = 9 + k * .5;
    grid += p(`M9 ${y}H${W}`, '#c9c9c9');
    ticks += p(`M0 ${y}H10`, '#333') + `<text transform="translate(7 ${y - 3}) rotate(-90)">20'${sec.toFixed(1).padStart(4, '0')}"</text>`;
    if (y + 30 < H) ticks += `<text transform="translate(7 ${y + 3}) rotate(-90)" text-anchor="end">-33°</text>`;
  }
  host.innerHTML = `<svg width="${W}" height="${H}">${r(0, 0, W, H, '#fff')}${grid}${r(0, 0, W, 12, '#e9eaeb')}${r(0, 12, 9, H, '#e3e4e5')}`
    + p(`M10 ${H}V12`, '#b5b5b5', 'none', 1) + p(`M.500 43L9.500 32V11.500H28L35 .500H${W - 32}L${W - 22} 11.500H${W}`, '#444')
    + p(`M35 11.500H${W - 22}`, '#777') + p(`M.500 ${H - 35}L9.500 ${H - 27}V${H}`, '#444')
    + p(`M${W - 59.500} 12V${H}`, '#555', 'none', 1.5) + p(`M${W - 62} 13H${W - 57}`, '#333', 'none', 2)
    + `${ticks}<text x="1" y="8">LB</text></svg>`;
}
drawCanvas();
addEventListener('resize', drawCanvas);
```
